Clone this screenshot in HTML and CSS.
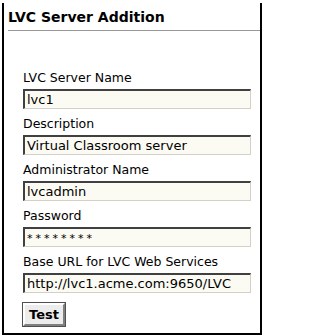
FILE: index.html
```html
<!DOCTYPE html>
<html>
<head>
<meta charset="utf-8">
<link rel="stylesheet" href="styles.css">
</head>
<body>
<div class="panel">
  <div class="title">LVC Server Addition</div>
  <form class="form">
    <label class="lbl">LVC Server Name</label>
    <div class="inp">lvc1</div>
    <label class="lbl">Description</label>
    <div class="inp">Virtual Classroom server</div>
    <label class="lbl">Administrator Name</label>
    <div class="inp">lvcadmin</div>
    <label class="lbl">Password</label>
    <div class="inp pw">********</div>
    <label class="lbl">Base URL for LVC Web Services</label>
    <div class="inp">http://lvc1.acme.com:9650/LVC</div>
    <div class="btnrow"><button type="button" class="btn">Test</button></div>
  </form>
</div>
</body>
</html>
```
FILE: styles.css
```css
html, body {
  margin: 0;
  padding: 0;
  background: #fff;
}
body {
  font-family: "DejaVu Sans", Verdana, sans-serif;
  color: #000;
}
.panel {
  margin: 3px 0 0 2px;
  width: 256px;
  height: 330px;
  border: 2px solid #000;
  border-top: none;
  overflow: hidden;
}
.title {
  margin-left: 4px;
  margin-top: 5px;
  padding-bottom: 4px;
  font-size: 14px;
  line-height: 18px;
  font-weight: bold;
  border-bottom: 1px solid #999;
}
.form {
  display: flex;
  flex-direction: column;
  align-items: flex-start;
  padding: 32px 0 0 19px;
  margin: 0;
}
.lbl {
  display: block;
  margin-top: 7px;
  margin-bottom: 3px;
  font-size: 12.5px;
  line-height: 16px;
}
.inp {
  box-sizing: border-box;
  width: 228px;
  height: 20px;
  border-top: 2px solid #404040;
  border-left: 2px solid #404040;
  border-right: 1px solid #d4d0c8;
  border-bottom: 1px solid #d4d0c8;
  background: #fbfbf3;
  font-size: 13px;
  line-height: 16px;
  padding: 1px 0 0 2px;
  white-space: nowrap;
  overflow: hidden;
}
.pw {
  font-size: 11px;
  letter-spacing: 3px;
  line-height: 17px;
}
.btnrow {
  margin-top: 10px;
}
.btn {
  box-sizing: border-box;
  width: 42px;
  height: 23px;
  font-family: "DejaVu Sans", Verdana, sans-serif;
  font-weight: bold;
  font-size: 13px;
  background: #ececec;
  border: 2px solid;
  border-color: #fff #808080 #808080 #fff;
  box-shadow: 0 0 0 1px #505050;
  padding: 0;
  color: #000;
}
```
